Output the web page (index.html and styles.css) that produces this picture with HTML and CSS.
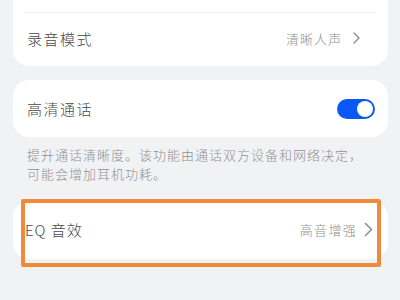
FILE: index.html
```html
<!DOCTYPE html>
<html lang="zh-CN">
<head>
<meta charset="utf-8">
<link rel="stylesheet" href="styles.css">
</head>
<body>
<div class="page">
  <div class="card card-top">
    <div class="row row-hidden"></div>
    <div class="divider"></div>
    <div class="row row-mode">
      <span class="label">录音模式</span>
      <span class="value">清晰人声<svg class="chev" viewBox="0 0 7 12" width="7" height="12"><path d="M1 1 L6 6 L1 11" fill="none" stroke="#8c8c8c" stroke-width="1.4" stroke-linecap="round" stroke-linejoin="round"/></svg></span>
    </div>
  </div>

  <div class="card">
    <div class="row row-call">
      <span class="label">高清通话</span>
      <span class="toggle"><span class="knob"></span></span>
    </div>
  </div>
  <p class="desc">提升通话清晰度。该功能由通话双方设备和网络决定，可能会增加耳机功耗。</p>

  <div class="card card-eq">
    <div class="row row-eq">
      <span class="label label-eq">EQ 音效</span>
      <span class="value value-eq">高音增强<svg class="chev chev-eq" viewBox="0 0 9 15" width="9" height="15"><path d="M1.5 1.5 L7.5 7.5 L1.5 13.5" fill="none" stroke="#8c8c8c" stroke-width="1.5" stroke-linecap="round" stroke-linejoin="round"/></svg></span>
    </div>
    <div class="highlight"></div>
  </div>
</div>
</body>
</html>
```
FILE: styles.css
```css
* { box-sizing: border-box; }
html, body {
  margin: 0;
  padding: 0;
  background: #f1f2f4;
  font-family: "Noto Sans CJK SC", "Noto Sans", sans-serif;
  overflow: hidden;
}
.page {
  width: 400px;
  height: 300px;
  padding: 0 12px 0 13px;
  display: flex;
  flex-direction: column;
}
.card {
  background: #ffffff;
  border-radius: 16px;
  position: relative;
}
.card-top {
  margin-top: -44px;
}
.row {
  display: flex;
  align-items: center;
  justify-content: space-between;
}
.row-hidden { height: 56px; }
.divider {
  height: 1px;
  margin: 0 12px;
  background: #ebebed;
}
.row-mode {
  height: 53px;
  padding: 0 28px 3px 14px;
}
.label {
  font-size: 15px;
  font-weight: 300;
  letter-spacing: 1.5px;
  color: #484848;
}
.value {
  display: flex;
  align-items: center;
  font-size: 13px;
  font-weight: 300;
  letter-spacing: 1px;
  color: #8e8e8e;
}
.chev { margin-left: 11px; }
.card + .card, .card-top + .card { margin-top: 14px; }
.row-call {
  height: 57px;
  padding: 0 13px 0 14px;
}
.toggle {
  width: 38px;
  height: 20px;
  border-radius: 10px;
  background: #0a59f7;
  display: flex;
  align-items: center;
  justify-content: flex-end;
  padding-right: 2px;
}
.knob {
  width: 16px;
  height: 16px;
  border-radius: 50%;
  background: #ffffff;
}
.desc {
  margin: 8px 0 0 0;
  padding: 0 14px;
  font-size: 13px;
  font-weight: 300;
  line-height: 19px;
  letter-spacing: 1px;
  color: #919191;
}
.card-eq {
  margin-top: 18px;
}
.row-eq {
  height: 58px;
  padding: 0 15px 1px 12px;
}
.label-eq { letter-spacing: 1px; }
.value-eq { letter-spacing: 1.3px; }
.chev-eq { margin-left: 7px; }
.highlight {
  position: absolute;
  left: 8px;
  top: -2px;
  width: 360px;
  height: 68px;
  border: 4px solid #f28a3e;
  border-radius: 2px;
}
```
